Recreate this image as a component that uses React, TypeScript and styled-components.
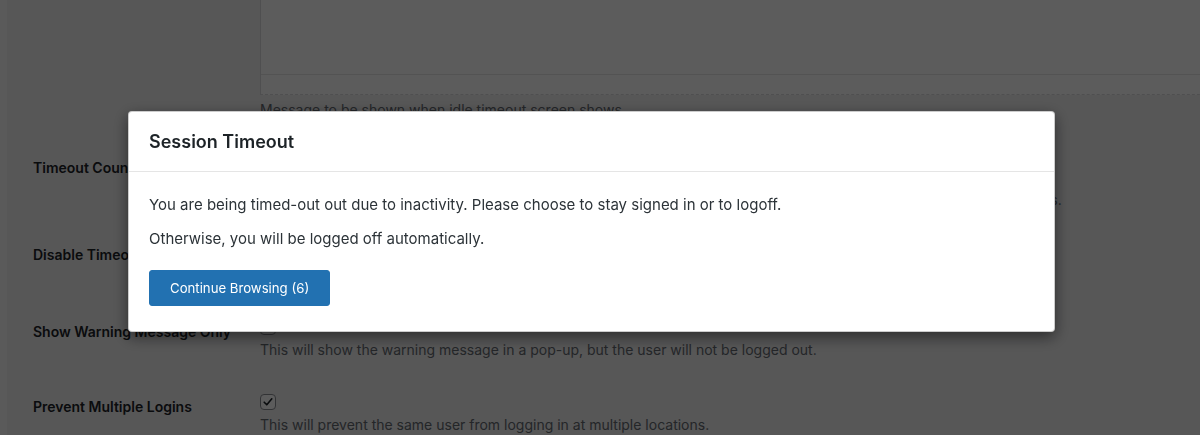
import styled, { createGlobalStyle } from 'styled-components';

const GlobalStyle = createGlobalStyle`
  html, body {
    margin: 0;
    padding: 0;
    background: #f0f0f1;
    overflow: hidden;
  }
  body {
    font-family: Inter, "Noto Sans", "Liberation Sans", sans-serif;
    color: #1d2327;
  }
  * {
    box-sizing: border-box;
  }
`;

const Screen = styled.div`
  display: flex;
  height: 435px;
  overflow: hidden;
`;

const AdminEdge = styled.div`
  width: 7px;
  flex-shrink: 0;
  background: #f8f8f8;
`;

const Content = styled.div`
  flex: 1;
  margin-top: -110px;
  padding-left: 26px;
`;

const Row = styled.div<{ $height: number }>`
  display: grid;
  grid-template-columns: 227px 1fr;
  height: ${(p) => p.$height}px;
`;

const Label = styled.div`
  padding-top: 20px;
  font-size: 14px;
  line-height: 21px;
  font-weight: 600;
  color: #1d2327;
`;

const Field = styled.div<{ $top?: number }>`
  padding-top: ${(p) => p.$top ?? 18}px;
  min-width: 0;
`;

const Editor = styled.div`
  display: flex;
  flex-direction: column;
  width: 1000px;
  height: 190px;
  background: #fff;
  border: 1px solid #dcdcde;
  border-bottom-style: dashed;
`;

const EditorArea = styled.div`
  flex: 1;
`;

const StatusBar = styled.div`
  height: 20px;
  border-top: 1px solid #e6e6e6;
`;

const Description = styled.p<{ $gap?: number }>`
  margin: ${(p) => p.$gap ?? 4}px 0 0;
  font-size: 14px;
  line-height: 21px;
  color: #646970;
  white-space: nowrap;
`;

const NumberInput = styled.input`
  width: 80px;
  height: 30px;
  padding: 0 8px;
  border: 1px solid #8c8f94;
  border-radius: 4px;
  font: inherit;
  font-size: 14px;
`;

const Check = styled.span`
  display: flex;
  align-items: center;
  justify-content: center;
  width: 16px;
  height: 16px;
  border: 1px solid #8c8f94;
  border-radius: 4px;
  background: #fff;
  color: #1d2327;
`;

const Overlay = styled.div`
  position: fixed;
  inset: 0;
  background: rgba(0, 0, 0, 0.64);
`;

const Modal = styled.div`
  width: 927px;
  margin: 111px 0 0 128px;
  background: #fff;
  border: 1px solid rgba(0, 0, 0, 0.2);
  border-radius: 4px;
  box-shadow: 0 5px 15px rgba(0, 0, 0, 0.5);
`;

const ModalHeader = styled.div`
  display: flex;
  align-items: center;
  height: 60px;
  padding: 0 20px;
  border-bottom: 1px solid #e5e5e5;
`;

const ModalTitle = styled.h4`
  margin: 0;
  font-size: 18px;
  font-weight: 600;
  color: #1d2327;
`;

const ModalBody = styled.div`
  padding: 22px 20px 25px;
`;

const Message = styled.p`
  margin: 0 0 12px;
  font-size: 15px;
  line-height: 22px;
  color: #2c3338;
`;

const PrimaryButton = styled.button`
  display: block;
  height: 36px;
  margin-top: 20px;
  padding: 0 20px;
  border: 1px solid #2271b1;
  border-radius: 3px;
  background: #2271b1;
  color: #fff;
  font-family: inherit;
  font-size: 13.2px;
  cursor: pointer;
`;

const CheckMark = () => (
  <svg width="12" height="12" viewBox="0 0 12 12" fill="none">
    <path d="M2.2 6.2 L4.8 8.8 L9.8 2.8" stroke="currentColor" strokeWidth="1.6" strokeLinecap="round" strokeLinejoin="round" />
  </svg>
);

const App = () => {
  const seconds = 6;

  return (
    <>
      <GlobalStyle />
      <Screen>
        <AdminEdge />
        <Content>
          <Row $height={247}>
            <Label>Idle Timeout Message</Label>
            <Field $top={15}>
              <Editor>
                <EditorArea />
                <StatusBar />
              </Editor>
              <Description>Message to be shown when idle timeout screen shows.</Description>
            </Field>
          </Row>
          <Row $height={87}>
            <Label>Timeout Countdown</Label>
            <Field $top={15}>
              <NumberInput type="number" defaultValue={10} />
              <Description $gap={7}>
                Countdown in seconds shown in a popup before the user is logged off after the idle period has expired and session ends.
              </Description>
            </Field>
          </Row>
          <Row $height={77}>
            <Label>Disable Timeout for Admins</Label>
            <Field>
              <Check />
              <Description>Administrators will not be logged out when they are idle.</Description>
            </Field>
          </Row>
          <Row $height={75}>
            <Label>Show Warning Message Only</Label>
            <Field>
              <Check />
              <Description>This will show the warning message in a pop-up, but the user will not be logged out.</Description>
            </Field>
          </Row>
          <Row $height={75}>
            <Label>Prevent Multiple Logins</Label>
            <Field>
              <Check>
                <CheckMark />
              </Check>
              <Description>This will prevent the same user from logging in at multiple locations.</Description>
            </Field>
          </Row>
        </Content>
      </Screen>
      <Overlay>
        <Modal role="dialog">
          <ModalHeader>
            <ModalTitle>Session Timeout</ModalTitle>
          </ModalHeader>
          <ModalBody>
            <Message>You are being timed-out out due to inactivity. Please choose to stay signed in or to logoff.</Message>
            <Message>Otherwise, you will be logged off automatically.</Message>
            <PrimaryButton type="button">Continue Browsing ({seconds})</PrimaryButton>
          </ModalBody>
        </Modal>
      </Overlay>
    </>
  );
};

export default App;
